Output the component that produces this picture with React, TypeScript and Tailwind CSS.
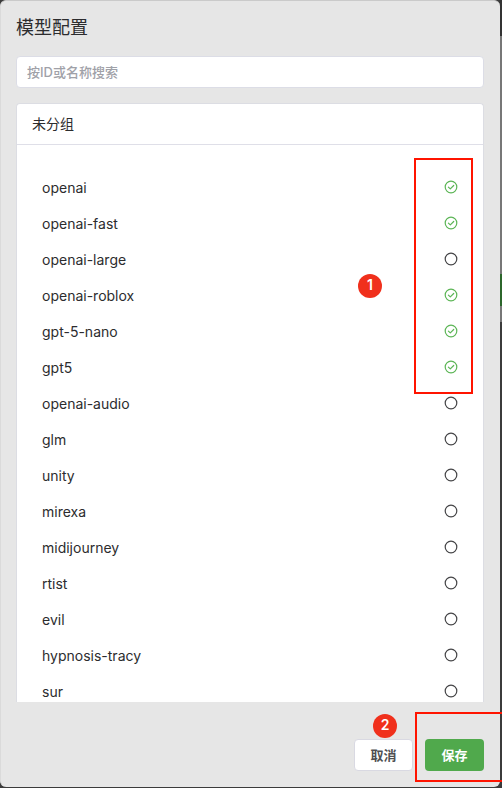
import { useState } from "react";

type Model = { id: string; enabled: boolean };

const initialModels: Model[] = [
  { id: "openai", enabled: true },
  { id: "openai-fast", enabled: true },
  { id: "openai-large", enabled: false },
  { id: "openai-roblox", enabled: true },
  { id: "gpt-5-nano", enabled: true },
  { id: "gpt5", enabled: true },
  { id: "openai-audio", enabled: false },
  { id: "glm", enabled: false },
  { id: "unity", enabled: false },
  { id: "mirexa", enabled: false },
  { id: "midijourney", enabled: false },
  { id: "rtist", enabled: false },
  { id: "evil", enabled: false },
  { id: "hypnosis-tracy", enabled: false },
  { id: "sur", enabled: false },
];

function StatusIcon({ checked }: { checked: boolean }) {
  return (
    <svg
      viewBox="0 0 14 14"
      aria-hidden="true"
      className={
        checked
          ? "pointer-events-none col-start-1 row-start-1 size-3.5 text-[#5cb556]"
          : "pointer-events-none col-start-1 row-start-1 size-3.5 text-[#444446]"
      }
      fill="none"
      stroke="currentColor"
      strokeWidth="1.2"
      strokeLinecap="round"
      strokeLinejoin="round"
    >
      <circle cx="7" cy="7" r="5.8" />
      {checked && <path d="M4.4 7.1 6.3 8.9 9.7 5.5" />}
    </svg>
  );
}

function ModelRow({ model, onToggle }: { model: Model; onToggle: () => void }) {
  return (
    <li>
      <label className="flex h-9 items-center justify-between">
        <span>{model.id}</span>
        <span className="mb-0.5 grid size-3.5">
          <input
            type="checkbox"
            checked={model.enabled}
            onChange={onToggle}
            className="col-start-1 row-start-1 size-3.5 appearance-none rounded-full"
          />
          <StatusIcon checked={model.enabled} />
        </span>
      </label>
    </li>
  );
}

const badge =
  "absolute flex size-6 items-center justify-center rounded-full bg-[#f0301c] pb-0.5 text-sm font-semibold text-white";

export default function App() {
  const [models, setModels] = useState(initialModels);
  const [query, setQuery] = useState("");

  const toggle = (id: string) =>
    setModels((list) => list.map((m) => (m.id === id ? { ...m, enabled: !m.enabled } : m)));

  return (
    <div className="flex h-screen overflow-hidden bg-[#3b3b3b] pb-px font-['Inter','Noto_Sans_CJK_SC',sans-serif] text-sm text-[#2c2c2e]">
      <main className="flex min-w-0 flex-1 flex-col rounded-md border-t border-l border-t-[#cacaca] border-l-[#dadada] bg-[#e6e6e6] pt-[11px] pr-4 pb-4 pl-[15px]">
        <h1 className="text-lg leading-8">模型配置</h1>
        <input
          type="text"
          aria-label="按ID或名称搜索"
          placeholder="按ID或名称搜索"
          value={query}
          onChange={(e) => setQuery(e.target.value)}
          className="mt-3 h-8 w-full shrink-0 rounded border border-[#dcdde6] bg-white px-2.5 text-[13px] font-medium outline-none placeholder:text-[#a0a1a8]"
        />
        <section className="mt-[15px] flex min-h-0 flex-1 flex-col overflow-hidden rounded-t border border-b-0 border-[#dcdde3] bg-white">
          <h2 className="h-[41px] shrink-0 border-b border-[#dfdfe8] px-[15px] leading-10">未分组</h2>
          <div className="relative min-h-0 flex-1 overflow-hidden px-[25px] pt-[25px]">
            <ul>
              {models
                .filter((m) => m.id.includes(query))
                .map((m) => (
                  <ModelRow key={m.id} model={m} onToggle={() => toggle(m.id)} />
                ))}
            </ul>
            <div className="pointer-events-none absolute top-[13px] right-2.5 h-[236px] w-[59px] border-2 border-[#ff1400]" />
            <span className={`${badge} top-[129px] right-[101px]`}>1</span>
          </div>
        </section>
        <footer className="relative flex justify-end gap-3 pt-[37px]">
          <button
            type="button"
            className="h-8 w-[59px] rounded border border-[#d9d9e2] bg-white text-[13px] font-semibold text-[#4f4f52]"
          >
            取消
          </button>
          <button
            type="button"
            className="h-8 w-[59px] rounded bg-[#50a94c] text-[13px] font-semibold text-white"
          >
            保存
          </button>
          <span className={`${badge} top-3 right-[87px]`}>2</span>
          <div className="pointer-events-none absolute top-2.5 -right-5 h-[70px] w-[89px] border-2 border-[#ff1400]" />
        </footer>
      </main>
      <div aria-hidden="true" className="flex w-0.5 flex-col">
        <div className="h-9 bg-[#333333]" />
        <div className="h-[238px] bg-[#777777]" />
        <div className="h-8 bg-[#2c662b]" />
        <div className="h-4 bg-[#777777]" />
      </div>
    </div>
  );
}
